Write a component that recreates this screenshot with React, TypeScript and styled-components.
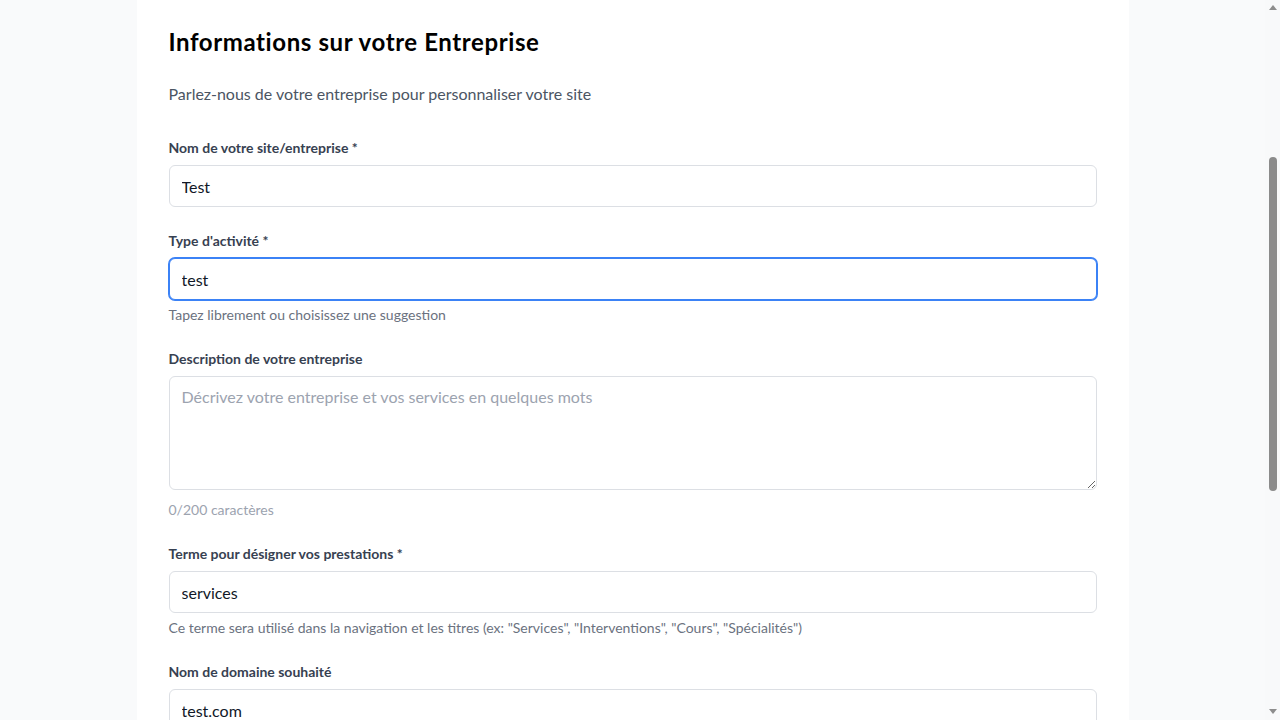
import styled, { createGlobalStyle } from 'styled-components';

const GlobalStyle = createGlobalStyle`
  body {
    margin: 0;
    background-color: #f9fafb;
    font-family: Lato, "Noto Sans", Arial, sans-serif;
    color: #111827;
    overflow: hidden;
  }
  * {
    box-sizing: border-box;
  }
`;

const Page = styled.div`
  height: 100vh;
  display: flex;
  overflow: hidden;
`;

const Main = styled.main`
  flex: 1;
  display: flex;
  justify-content: center;
  align-items: flex-start;
`;

// window scrollbar, as drawn by the browser in the screenshot
const ScrollTrack = styled.div`
  width: 15px;
  height: 100vh;
  flex-shrink: 0;
  background-color: #f8f9fa;
  display: flex;
  flex-direction: column;
  align-items: center;
  padding: 5px 0 6px;
`;

const Arrow = styled.div<{ $down?: boolean }>`
  width: 0;
  height: 0;
  border-left: 4.5px solid transparent;
  border-right: 4.5px solid transparent;
  ${(p) =>
    p.$down ? 'border-top: 5px solid #8d8d8d; margin-top: auto;' : 'border-bottom: 5px solid #8d8d8d;'}
`;

const Thumb = styled.div`
  width: 8px;
  height: 334px;
  margin-top: 147px;
  border-radius: 4px;
  background-color: #8b8b8b;
`;

const Card = styled.section`
  width: 992px;
  background-color: #ffffff;
  padding: 26px 32px 40px;
`;

const Title = styled.h2`
  margin: 0;
  font-size: 24px;
  line-height: 32px;
  font-weight: 700;
  letter-spacing: 0.6px;
  color: #000000;
`;

const Subtitle = styled.p`
  margin: 24px 0 32px;
  font-size: 16px;
  line-height: 24px;
  color: #4b5563;
`;

const Form = styled.form`
  display: flex;
  flex-direction: column;
  gap: 24px;
`;

const Field = styled.div`
  display: flex;
  flex-direction: column;
`;

const Label = styled.label`
  font-size: 14px;
  line-height: 20px;
  font-weight: 700;
  color: #374151;
  margin-bottom: 7px;
`;

const TextInput = styled.input<{ $focused?: boolean }>`
  width: 100%;
  height: 42px;
  padding: 8px 12px;
  font-family: inherit;
  font-size: 16px;
  line-height: 24px;
  color: #111827;
  background: #ffffff;
  border: 1px solid ${(p) => (p.$focused ? '#3b82f6' : '#dcdfe4')};
  border-radius: 6px;
  outline: none;
  box-shadow: ${(p) => (p.$focused ? '0 0 0 1px #3b82f6' : 'none')};
`;

const TextArea = styled.textarea`
  width: 100%;
  height: 114px;
  padding: 8px 12px;
  font-family: inherit;
  font-size: 16px;
  line-height: 24px;
  color: #111827;
  background: #ffffff;
  border: 1px solid #dcdfe4;
  border-radius: 6px;
  outline: none;
  resize: vertical;

  &::placeholder {
    color: #9ca3af;
  }
`;

const Hint = styled.p<{ $muted?: boolean }>`
  margin: ${(p) => (p.$muted ? '10px' : '5px')} 0 0;
  font-size: 14px;
  line-height: 20px;
  color: ${(p) => (p.$muted ? '#9ca3af' : '#6b7280')};
`;

export default function App() {
  return (
    <>
      <GlobalStyle />
      <Page>
        <Main>
          <Card>
            <Title>Informations sur votre Entreprise</Title>
            <Subtitle>Parlez-nous de votre entreprise pour personnaliser votre site</Subtitle>
            <Form onSubmit={(e) => e.preventDefault()}>
              <Field>
                <Label htmlFor="name">Nom de votre site/entreprise *</Label>
                <TextInput id="name" defaultValue="Test" />
              </Field>
              <Field>
                <Label htmlFor="activity">Type d'activité *</Label>
                <TextInput id="activity" defaultValue="test" $focused />
                <Hint>Tapez librement ou choisissez une suggestion</Hint>
              </Field>
              <Field>
                <Label htmlFor="description">Description de votre entreprise</Label>
                <TextArea
                  id="description"
                  placeholder="Décrivez votre entreprise et vos services en quelques mots"
                />
                <Hint $muted>0/200 caractères</Hint>
              </Field>
              <Field>
                <Label htmlFor="term">Terme pour désigner vos prestations *</Label>
                <TextInput id="term" defaultValue="services" />
                <Hint>
                  Ce terme sera utilisé dans la navigation et les titres (ex: "Services",
                  "Interventions", "Cours", "Spécialités")
                </Hint>
              </Field>
              <Field>
                <Label htmlFor="domain">Nom de domaine souhaité</Label>
                <TextInput id="domain" defaultValue="test.com" />
              </Field>
            </Form>
          </Card>
        </Main>
        <ScrollTrack aria-hidden>
          <Arrow />
          <Thumb />
          <Arrow $down />
        </ScrollTrack>
      </Page>
    </>
  );
}
